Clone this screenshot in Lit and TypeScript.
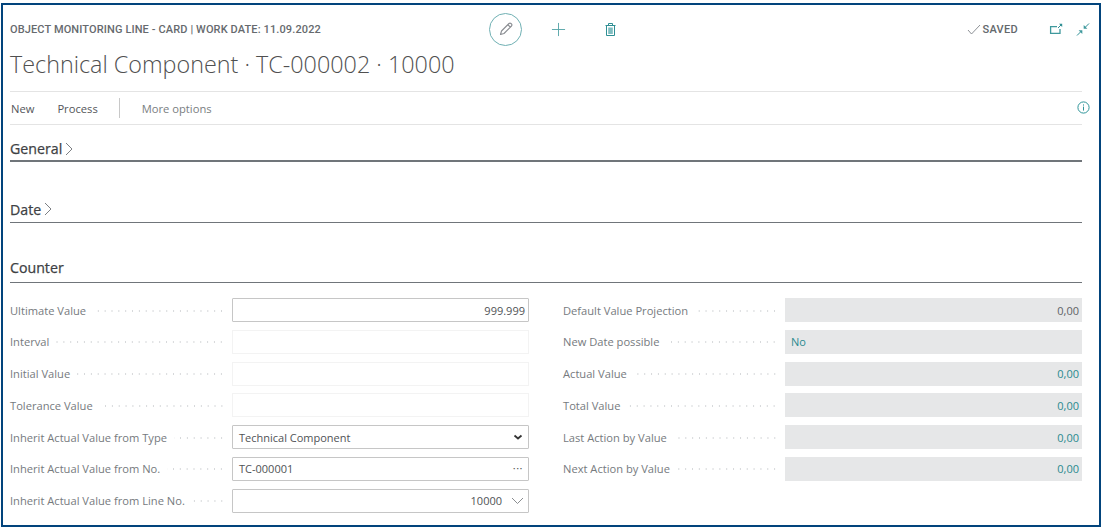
import { LitElement, html, css, svg } from "lit";
import { customElement } from "lit/decorators.js";

const left = [
  ["Ultimate Value", "999.999", "edit right"],
  ["Interval", "", "blank"],
  ["Initial Value", "", "blank"],
  ["Tolerance Value", "", "blank"],
  ["Inherit Actual Value from Type", "Technical Component", "edit select"],
  ["Inherit Actual Value from No.", "TC-000001", "edit lookup"],
  ["Inherit Actual Value from Line No.", "10000", "edit spin"],
];
const right = [
  ["Default Value Projection", "0,00", "ro right"],
  ["New Date possible", "No", "ro link"],
  ["Actual Value", "0,00", "ro right link"],
  ["Total Value", "0,00", "ro right link"],
  ["Last Action by Value", "0,00", "ro right link"],
  ["Next Action by Value", "0,00", "ro right link"],
];

@customElement("app-root")
export class AppRoot extends LitElement {
  static styles = css`
    :host { display: block; width: 1104px; height: 529px; background: #fff; overflow: hidden;
      font-family: "Open Sans", "Noto Sans", sans-serif; font-size: 11px; color: #5f6467; }
    * { box-sizing: border-box; }
    .frame { margin: 3px 3px 0 1px; height: 524px; border: 2px solid #02447c; padding: 0 17px 0 7px; }
    .head { display: flex; align-items: center; height: 42px; padding-top: 6px; margin-right: -8px; }
    .eyebrow { flex: 0 0 480px; font-family: Roboto, sans-serif; font-weight: 500; font-size: 11px; color: #666a6e; letter-spacing: .12px; }
    .cmd { display: flex; align-items: center; }
    .circle { width: 33px; height: 33px; border: 1px solid #6fb0b3; border-radius: 50%; display: flex; align-items: center; justify-content: center; margin-left: -1px; }
    .plus { margin-left: 29px; } .trash { margin-left: 38px; }
    .saved { margin-left: auto; display: flex; align-items: center; gap: 1px; font-family: Roboto, sans-serif; font-weight: 500; font-size: 11px; letter-spacing: .3px; color: #63686c; }
    .win { margin-left: 31px; } .win2 { margin-left: 13px; }
    .title { font-family: "Open Sans", sans-serif; font-weight: 300; font-size: 23.35px; line-height: 34px; color: #505050; height: 44px; white-space: nowrap; }
    .bar { display: flex; align-items: center; height: 34px; border-top: 1px solid #e4e4e4; border-bottom: 1px solid #e4e4e4; color: #53565a; font-size: 11.2px; padding-left: 1px; }
    .bar .p { margin-left: 23px; }
    .bar .sep { width: 1px; height: 20px; background: #c8c8c8; margin: 0 22px 0 21px; }
    .bar .m { color: #7a7e81; }
    .bar svg { margin-left: auto; margin-right: -8px; margin-top: -2px; }
    .sec { display: flex; align-items: center; gap: 3px; font-size: 14.2px; font-weight: 500; -webkit-text-stroke: .25px #3e4144; color: #3e4144; height: 24px; border-bottom: 1px solid #70757a; }
    .s1 { margin-top: 13px; border-bottom-width: 2px; padding-bottom: 1px; }
    .s2 { margin-top: 36px; height: 25px; padding-bottom: 2px; }
    .s3 { margin-top: 35px; height: 25px; padding-bottom: 6px; }
    .grid { display: grid; grid-template-columns: 519px 519px; column-gap: 15px; margin-top: 15px; }
    .col { display: flex; flex-direction: column; gap: 7.8px; }
    .row { display: flex; height: 24px; align-items: center; }
    .lab { display: flex; align-items: center; flex: 0 0 222px; height: 24px; white-space: nowrap; color: #767a7e; font-size: 11.15px; }
    .col.r { padding-left: 19px; }
    .dots { flex: 1; height: 2px; margin: 1px 7px 0 7px; background-image: radial-gradient(circle, #d6d8da 0.7px, transparent 0.9px); background-size: 6.85px 2px; background-position: right center; background-repeat: repeat-x; }
    .f { flex: 0 0 297px; height: 24px; display: flex; align-items: center; padding: 0 3px 0 6px; font-size: 11px; color: #505356; }
    .edit { border: 1px solid #c6c6c6; border-radius: 1px; }
    .blank { border: 1px solid #f3f3f3; }
    .ro { background: #e6e7e8; color: #606366; padding-left: 6px; }
    .right { justify-content: flex-end; }
    .link { color: #2a8a8f; }
    .select { justify-content: space-between; padding-right: 5px; }
    .lookup { justify-content: space-between; padding-right: 5px; }
    .spin { justify-content: flex-end; gap: 9px; padding-right: 4px; }
    .ell { color: #555; letter-spacing: .5px; line-height: 1; margin-top: -3px; }
  `;

  private icon(d: any, w = 16, h = 16, vb = "0 0 16 16", cls = "") {
    return html`<svg class=${cls} width=${w} height=${h} viewBox=${vb} fill="none">${d}</svg>`;
  }

  private field(r: string[]) {
    const cls = "f " + r[2];
    let tail: any = "";
    if (r[2].includes("select")) tail = this.icon(svg`<path d="M1.5 1.5 L5 4.5 L8.5 1.5" stroke="#333" stroke-width="1.8"/>`, 10, 6, "0 0 10 6");
    if (r[2].includes("lookup")) tail = html`<span class="ell">···</span>`;
    if (r[2].includes("spin")) tail = this.icon(svg`<path d="M1 1 L6.5 6.5 L12 1" stroke="#8a8d90" stroke-width="1"/>`, 13, 8, "0 0 13 8");
    return html`<div class=${cls}><span>${r[1]}</span>${tail}</div>`;
  }

  private rows(list: string[][]) {
    return list.map((r) => html`<div class="row"><div class="lab"><span>${r[0]}</span><span class="dots"></span></div>${this.field(r)}</div>`);
  }

  render() {
    const chev = this.icon(svg`<path d="M1 1 L7 7 L1 13" stroke="#6d7175" stroke-width=".9"/>`, 8, 14, "0 0 8 14");
    return html`<div class="frame">
      <div class="head">
        <div class="eyebrow">OBJECT MONITORING LINE - CARD | WORK DATE: 11.09.2022</div>
        <div class="cmd">
          <div class="circle">${this.icon(svg`<path d="M2.5 13.5 L3.5 10 L11 2.5 Q12 1.7 13 2.5 L13.6 3.1 Q14.3 4 13.5 5 L6 12.5 Z M10 3.8 L12.2 6" stroke="#8a8d92" stroke-width="1.1" stroke-linejoin="round"/>`)}</div>
          ${this.icon(svg`<path d="M8 1 V15 M1 8 H15" stroke="#57a5a9" stroke-width="1"/>`, 15, 15, "0 0 16 16", "plus")}
          ${this.icon(svg`<path d="M1.5 3.5 H11.5 M4.5 3.5 V1.5 H8.5 V3.5" stroke="#2f8f94" stroke-width="1"/><path d="M2.5 3.5 V13.5 H10.5 V3.5" stroke="#2f8f94" stroke-width="1"/><rect x="4.2" y="5.5" width="4.6" height="6.5" fill="#7fbdc0"/>`, 13, 15, "0 0 13 15", "trash")}
        </div>
        <div class="saved">${this.icon(svg`<path d="M1 6 L4.5 10 L13 1" stroke="#80858a" stroke-width=".9"/>`, 14, 11, "0 0 14 11")}<span>SAVED</span></div>
        ${this.icon(svg`<path d="M8 3.6 H1.6 V10.4 H11 V6" stroke="#3f999d" stroke-width="1.3"/><path d="M9 5 L12 2" stroke="#2f8f94" stroke-width="1"/><path d="M10 .8 H13.2 V4 Z" fill="#2f8f94"/>`, 14, 12, "0 0 14 12", "win")}
        ${this.icon(svg`<path d="M1 12.5 L5 8.5" stroke="#2f8f94" stroke-width="1"/><path d="M2.6 7.2 H6.3 V10.9 Z" fill="#3f999d"/><path d="M13 .5 L9 4.5" stroke="#2f8f94" stroke-width="1"/><path d="M7.7 2.1 V5.8 H11.4 Z" fill="#3f999d"/>`, 14, 13, "0 0 14 13", "win2")}
      </div>
      <div class="title">Technical Component · TC-000002 · 10000</div>
      <div class="bar"><span>New</span><span class="p">Process</span><span class="sep"></span><span class="m">More options</span>
        ${this.icon(svg`<circle cx="6.5" cy="6.5" r="5.6" stroke="#2f9599" stroke-width="1"/><path d="M6.5 5.6 V9.6 M6.5 3.4 V4.6" stroke="#2f9599" stroke-width="1"/>`, 13, 13, "0 0 13 13")}
      </div>
      <div class="sec s1"><span>General</span>${chev}</div>
      <div class="sec s2"><span>Date</span>${chev}</div>
      <div class="sec s3"><span>Counter</span></div>
      <div class="grid">
        <div class="col">${this.rows(left)}</div>
        <div class="col r">${this.rows(right)}</div>
      </div>
    </div>`;
  }
}
